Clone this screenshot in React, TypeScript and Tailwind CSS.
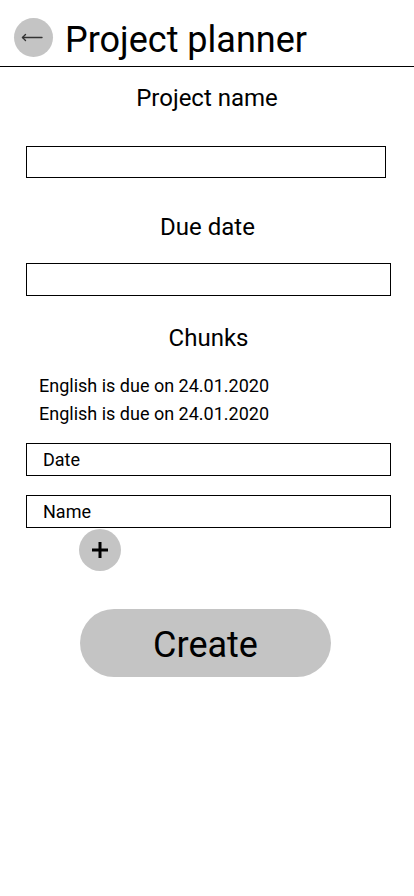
import React from 'react';

const chunks = [
  { name: 'English', date: '24.01.2020' },
  { name: 'English', date: '24.01.2020' },
];

export default function App() {
  return (
    <div className="min-h-screen w-[414px] bg-white text-black font-['Roboto',sans-serif]">
      <header className="h-[67px] flex items-center pl-[14px] gap-3 border-b border-black">
        <button className="w-[39px] h-[39px] rounded-full bg-[#c4c4c4] flex items-center justify-center mt-[8px]">
          <svg width="39" height="39" viewBox="0 0 39 39" fill="none" stroke="#333" strokeWidth="1.4" strokeLinecap="round" strokeLinejoin="round">
            <path d="M8.5 19.5H28" />
            <path d="M11.5 16.5L8.5 19.5L11.5 22.5" />
          </svg>
        </button>
        <h1 className="text-[36px] leading-none mt-[13px]">Project planner</h1>
      </header>

      <div className="flex flex-col">
        <label className="mt-[17px] text-center text-[24px] leading-[28px]">Project name</label>
        <input className="mt-[34px] ml-[26px] w-[360px] h-[32px] border border-black outline-none px-4" />

        <label className="mt-[35px] text-center text-[24px] leading-[28px] pl-[1px]">Due date</label>
        <input className="mt-[22px] ml-[26px] w-[365px] h-[33px] border border-black outline-none px-4" />

        <h2 className="mt-[28px] text-center text-[24px] leading-[28px] pl-[3px]">Chunks</h2>
        <ul className="mt-[20px] pl-[39px] text-[18px] leading-[28px]">
          {chunks.map((c, i) => (
            <li key={i}>
              {c.name} is due on {c.date}
            </li>
          ))}
        </ul>

        <input
          placeholder="Date"
          className="mt-[15px] ml-[26px] w-[365px] h-[33px] border border-black outline-none pl-4 text-[18px] placeholder:text-black"
        />
        <input
          placeholder="Name"
          className="mt-[19px] ml-[26px] w-[365px] h-[33px] border border-black outline-none pl-4 text-[18px] placeholder:text-black"
        />
        <button className="mt-[1px] ml-[79px] w-[42px] h-[42px] rounded-full bg-[#c4c4c4] flex items-center justify-center">
          <svg width="18" height="18" viewBox="0 0 18 18" fill="none" stroke="#000" strokeWidth="3">
            <path d="M9 1V17M1 9H17" />
          </svg>
        </button>

        <button className="mt-[38px] ml-[80px] w-[251px] h-[68px] rounded-full bg-[#c4c4c4] text-[36px] leading-none pt-[4px]">
          Create
        </button>
      </div>
    </div>
  );
}
